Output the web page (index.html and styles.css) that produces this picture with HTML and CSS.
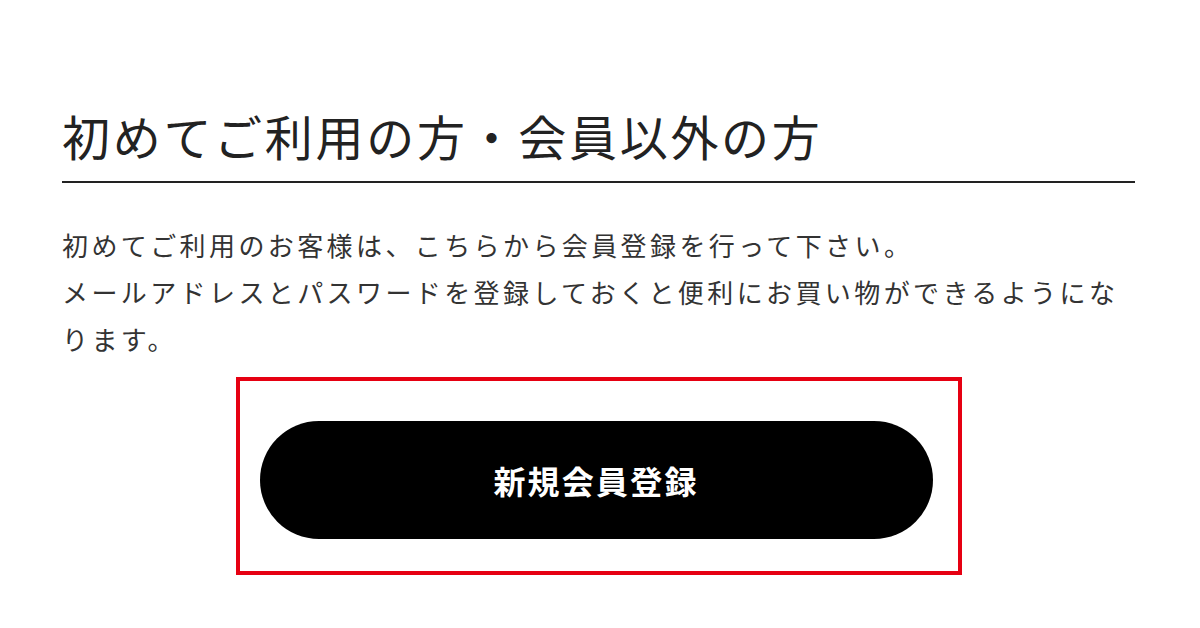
FILE: index.html
```html
<!DOCTYPE html>
<html lang="ja">
<head>
    <meta charset="UTF-8">
    <title>初めてご利用の方・会員以外の方</title>
    <link rel="stylesheet" href="styles.css">
</head>
<body>
<div class="guest">
    <h2 class="guest-title">初めてご利用の方・会員以外の方</h2>
    <p class="guest-text">初めてご利用のお客様は、こちらから会員登録を行って下さい。<br>メールアドレスとパスワードを登録しておくと便利にお買い物ができるようになります。</p>
    <div class="guest-action">
        <a class="btn-entry" href="#">新規会員登録</a>
    </div>
</div>
</body>
</html>
```

FILE: styles.css
```css
body {
    margin: 0;
    background-color: #fff;
    font-family: "Noto Sans CJK JP", "Noto Sans", sans-serif;
}

.guest {
    width: 1073px;
    margin-left: 62px;
    padding-top: 99px;
}

.guest-title {
    margin: 0;
    padding-bottom: 10px;
    border-bottom: 2px solid #222;
    font-size: 48px;
    font-weight: normal;
    line-height: 72px;
    letter-spacing: 2.7px;
    color: #222;
}

.guest-text {
    margin: 38px 0 0;
    font-size: 26px;
    line-height: 47px;
    letter-spacing: 3.4px;
    color: #333;
}

.guest-action {
    display: flex;
    justify-content: center;
    width: 718px;
    margin: 15px auto 0;
    padding: 40px 0 32px;
    border: 4px solid #e60012;
}

.btn-entry {
    display: flex;
    align-items: center;
    justify-content: center;
    width: 673px;
    height: 118px;
    margin-right: 5px;
    border-radius: 59px;
    background-color: #000;
    color: #fff;
    font-size: 32px;
    font-weight: bold;
    letter-spacing: 2.2px;
    text-decoration: none;
}
```
